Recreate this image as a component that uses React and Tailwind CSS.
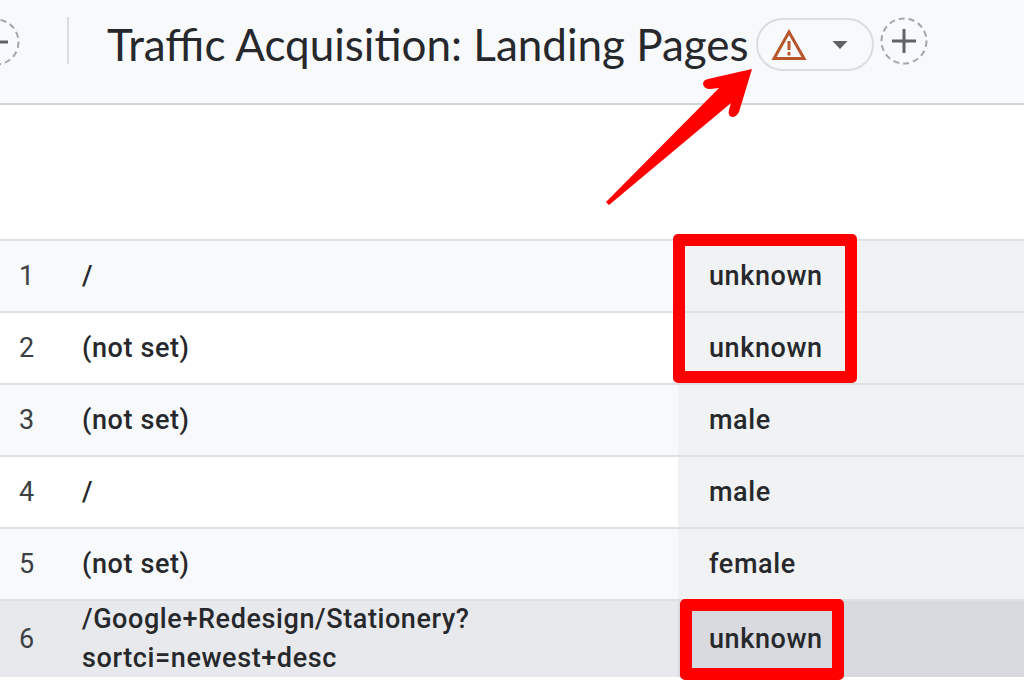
import React from "react";

const rows = [
    { id: 1, path: "/", value: "unknown", left: "bg-[#f8f9fb]", right: "bg-[#f1f2f4]" },
    { id: 2, path: "(not set)", value: "unknown", left: "bg-white", right: "bg-[#f1f2f4]" },
    { id: 3, path: "(not set)", value: "male", left: "bg-[#f8f9fb]", right: "bg-[#f1f2f4]" },
    { id: 4, path: "/", value: "male", left: "bg-white", right: "bg-[#f1f2f4]" },
    { id: 5, path: "(not set)", value: "female", left: "bg-[#f8f9fb]", right: "bg-[#f1f2f4]" },
];

const DashedPlus = ({ className = "" }) => (
    <svg width="48" height="48" viewBox="0 0 48 48" className={className}>
        <circle cx="24" cy="24" r="22.5" fill="none" stroke="#a4a6aa" strokeWidth="2" strokeDasharray="6 4" />
        <path d="M24 12v24M12 24h24" stroke="#5f6368" strokeWidth="3" />
    </svg>
);

const App = () => {
    return (
        <div className="relative w-[1024px] h-[684px] overflow-hidden bg-white font-['Roboto',sans-serif] text-[#26282c]">
            {/* header */}
            <div className="h-[105px] flex items-start bg-[#f8f9fb] border-b-2 border-[#d2d4d8]">
                <DashedPlus className="ml-[-28px] mt-[18px] shrink-0" />
                <div className="ml-[47px] mt-[17px] w-[2px] h-[47px] bg-[#dadce0]" />
                <h1 className="ml-[38px] mt-[16px] w-[642px] shrink-0 text-[44px] leading-[56px] font-['Lato',sans-serif] whitespace-nowrap">
                    Traffic Acquisition: Landing Pages
                </h1>
                <div className="ml-[7px] mt-[18px] w-[118px] h-[53px] shrink-0 flex items-center rounded-full border-2 border-[#dadce0] pl-[13px]">
                    <svg width="36" height="32" viewBox="0 0 36 32">
                        <path d="M18 3 33 29.5H3Z" fill="none" stroke="#b5562b" strokeWidth="3" />
                        <path d="M18 12v9M18 23v3.5" stroke="#b5562b" strokeWidth="3" />
                    </svg>
                    <svg width="18" height="10" viewBox="0 0 18 10" className="ml-[24px]">
                        <path d="M1.5 1h15L9 9Z" fill="#5f6368" />
                    </svg>
                </div>
                <DashedPlus className="ml-[6px] mt-[17px] shrink-0" />
            </div>

            {/* table */}
            <div className="mt-[134px] text-[27px] tracking-[0.6px]">
                {rows.map(row => (
                    <div key={row.id} className="flex h-[72px] border-t-2 border-[#dfe0e3]">
                        <div className={`w-[678px] flex items-center ${row.left}`}>
                            <span className="w-[82px] pl-[19px] text-[#3c4043]">{row.id}</span>
                            <span className="font-medium">{row.path}</span>
                        </div>
                        <div className={`flex-1 flex items-center pl-[31px] font-medium ${row.right}`}>{row.value}</div>
                    </div>
                ))}
                <div className="flex h-[78px] border-t-2 border-[#dfe0e3]">
                    <div className="w-[678px] flex items-center bg-[#e8e9ed]">
                        <span className="w-[82px] pl-[19px] text-[#3c4043]">6</span>
                        <span className="font-medium leading-[39px]">
                            /Google+Redesign/Stationery?
                            <br />
                            sortci=newest+desc
                        </span>
                    </div>
                    <div className="flex-1 flex items-center pl-[31px] font-medium bg-[#d9dadf]">unknown</div>
                </div>
            </div>

            {/* annotations */}
            <div className="absolute left-[673px] top-[234px] w-[184px] h-[149px] border-[12px] border-[#ff0000] rounded-[5px]" />
            <div className="absolute left-[680px] top-[599px] w-[164px] h-[81px] border-[12px] border-[#ff0000] rounded-[5px]" />
            <svg className="absolute left-0 top-0" width="1024" height="684" viewBox="0 0 1024 684">
                <path
                    d="M752 69 L739 112 Q735 119 730 116 Q728 114 729 110 L731 103 L609 205 L606 202 L719 88 L710 89 Q704 89 703 84 Q703 80 708 79 Z"
                    fill="#ff0000"
                />
            </svg>
        </div>
    );
};

export default App;
